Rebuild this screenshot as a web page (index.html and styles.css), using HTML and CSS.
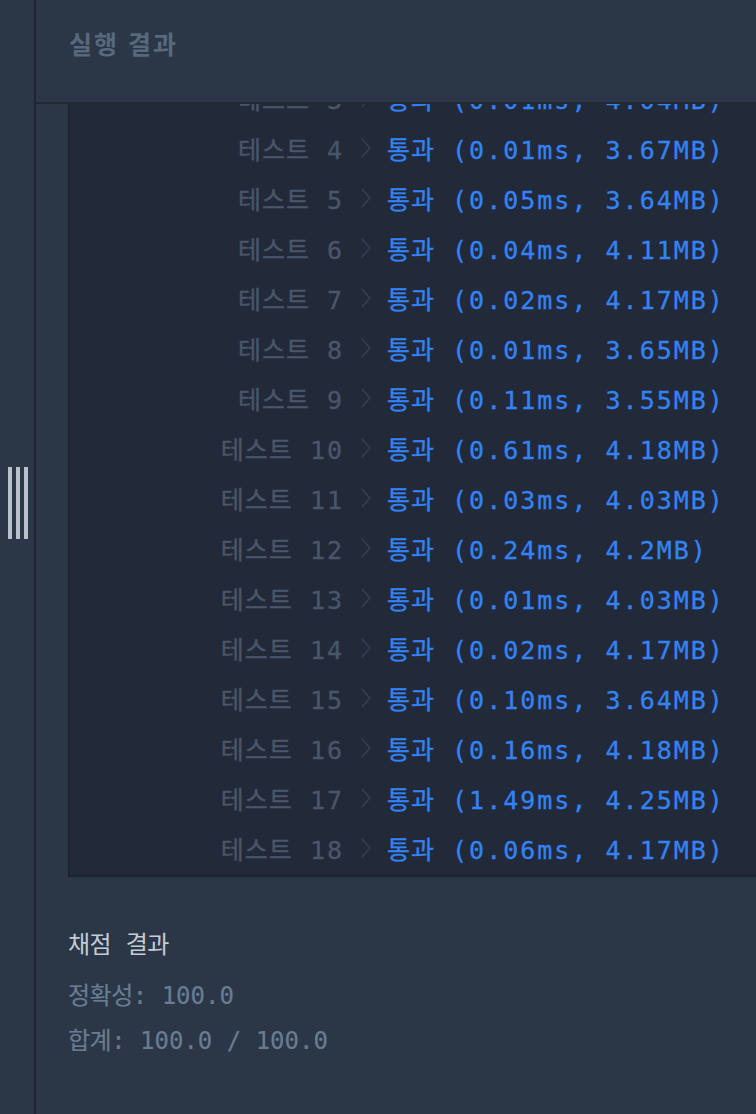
FILE: index.html
```html
<!DOCTYPE html>
<html lang="ko">
<head>
    <meta charset="UTF-8">
    <meta name="viewport" content="width=device-width, initial-scale=1.0">
    <title>실행 결과</title>
    <link rel="stylesheet" href="styles.css">
</head>
<body>
    <div class="rail">
        <div class="handle">
            <span></span><span></span><span></span>
        </div>
    </div>

    <div class="panel">
        <div class="panel-header">실행 결과</div>

        <div class="console">
            <div class="rows">
                <div class="row"><span class="name"><span class="ko">테스트</span> 1</span><svg class="chev" viewBox="0 0 10 20"><polyline points="1,1 9,10 1,19"/></svg><span class="result"><span class="ko">통과</span> (0.01ms, 4.2MB)</span></div>
                <div class="row"><span class="name"><span class="ko">테스트</span> 2</span><svg class="chev" viewBox="0 0 10 20"><polyline points="1,1 9,10 1,19"/></svg><span class="result"><span class="ko">통과</span> (0.02ms, 4.16MB)</span></div>
                <div class="row"><span class="name"><span class="ko">테스트</span> 3</span><svg class="chev" viewBox="0 0 10 20"><polyline points="1,1 9,10 1,19"/></svg><span class="result"><span class="ko">통과</span> (0.01ms, 4.04MB)</span></div>
                <div class="row"><span class="name"><span class="ko">테스트</span> 4</span><svg class="chev" viewBox="0 0 10 20"><polyline points="1,1 9,10 1,19"/></svg><span class="result"><span class="ko">통과</span> (0.01ms, 3.67MB)</span></div>
                <div class="row"><span class="name"><span class="ko">테스트</span> 5</span><svg class="chev" viewBox="0 0 10 20"><polyline points="1,1 9,10 1,19"/></svg><span class="result"><span class="ko">통과</span> (0.05ms, 3.64MB)</span></div>
                <div class="row"><span class="name"><span class="ko">테스트</span> 6</span><svg class="chev" viewBox="0 0 10 20"><polyline points="1,1 9,10 1,19"/></svg><span class="result"><span class="ko">통과</span> (0.04ms, 4.11MB)</span></div>
                <div class="row"><span class="name"><span class="ko">테스트</span> 7</span><svg class="chev" viewBox="0 0 10 20"><polyline points="1,1 9,10 1,19"/></svg><span class="result"><span class="ko">통과</span> (0.02ms, 4.17MB)</span></div>
                <div class="row"><span class="name"><span class="ko">테스트</span> 8</span><svg class="chev" viewBox="0 0 10 20"><polyline points="1,1 9,10 1,19"/></svg><span class="result"><span class="ko">통과</span> (0.01ms, 3.65MB)</span></div>
                <div class="row"><span class="name"><span class="ko">테스트</span> 9</span><svg class="chev" viewBox="0 0 10 20"><polyline points="1,1 9,10 1,19"/></svg><span class="result"><span class="ko">통과</span> (0.11ms, 3.55MB)</span></div>
                <div class="row"><span class="name"><span class="ko">테스트</span> 10</span><svg class="chev" viewBox="0 0 10 20"><polyline points="1,1 9,10 1,19"/></svg><span class="result"><span class="ko">통과</span> (0.61ms, 4.18MB)</span></div>
                <div class="row"><span class="name"><span class="ko">테스트</span> 11</span><svg class="chev" viewBox="0 0 10 20"><polyline points="1,1 9,10 1,19"/></svg><span class="result"><span class="ko">통과</span> (0.03ms, 4.03MB)</span></div>
                <div class="row"><span class="name"><span class="ko">테스트</span> 12</span><svg class="chev" viewBox="0 0 10 20"><polyline points="1,1 9,10 1,19"/></svg><span class="result"><span class="ko">통과</span> (0.24ms, 4.2MB)</span></div>
                <div class="row"><span class="name"><span class="ko">테스트</span> 13</span><svg class="chev" viewBox="0 0 10 20"><polyline points="1,1 9,10 1,19"/></svg><span class="result"><span class="ko">통과</span> (0.01ms, 4.03MB)</span></div>
                <div class="row"><span class="name"><span class="ko">테스트</span> 14</span><svg class="chev" viewBox="0 0 10 20"><polyline points="1,1 9,10 1,19"/></svg><span class="result"><span class="ko">통과</span> (0.02ms, 4.17MB)</span></div>
                <div class="row"><span class="name"><span class="ko">테스트</span> 15</span><svg class="chev" viewBox="0 0 10 20"><polyline points="1,1 9,10 1,19"/></svg><span class="result"><span class="ko">통과</span> (0.10ms, 3.64MB)</span></div>
                <div class="row"><span class="name"><span class="ko">테스트</span> 16</span><svg class="chev" viewBox="0 0 10 20"><polyline points="1,1 9,10 1,19"/></svg><span class="result"><span class="ko">통과</span> (0.16ms, 4.18MB)</span></div>
                <div class="row"><span class="name"><span class="ko">테스트</span> 17</span><svg class="chev" viewBox="0 0 10 20"><polyline points="1,1 9,10 1,19"/></svg><span class="result"><span class="ko">통과</span> (1.49ms, 4.25MB)</span></div>
                <div class="row"><span class="name"><span class="ko">테스트</span> 18</span><svg class="chev" viewBox="0 0 10 20"><polyline points="1,1 9,10 1,19"/></svg><span class="result"><span class="ko">통과</span> (0.06ms, 4.17MB)</span></div>
            </div>
        </div>

        <div class="summary">
            <div class="summary-title"><span class="ko">채점</span> <span class="ko">결과</span></div>
            <div class="summary-line"><span class="ko">정확성</span>: 100.0</div>
            <div class="summary-line"><span class="ko">합계</span>: 100.0 / 100.0</div>
        </div>
    </div>
</body>
</html>
```

FILE: styles.css
```css
html, body {
    height: 100%;
}
body {
    display: flex;
    flex-direction: row;
    margin: 0;
    overflow: hidden;
    background-color: #2b3646;
    font-family: "Noto Sans CJK KR", "Noto Sans", sans-serif;
}
.rail {
    width: 36px;
    flex-shrink: 0;
    border-right: 2px solid #1d2533;
    display: flex;
    flex-direction: column;
    align-items: flex-start;
    padding: 467px 0 0 8px;
    box-sizing: border-box;
}
.handle {
    display: flex;
    gap: 4px;
}
.handle span {
    width: 4px;
    height: 72px;
    background-color: #b8c1cb;
}
.panel {
    flex: 1;
    min-width: 0;
    display: flex;
    flex-direction: column;
}
.panel > div {
    flex-shrink: 0;
}
.panel-header {
    height: 104px;
    border-bottom: 2px solid #1f2835;
    padding: 27px 0 0 33px;
    box-sizing: border-box;
    font-size: 25px;
    font-weight: 700;
    letter-spacing: 2px;
    line-height: 32px;
    color: #58687d;
}
.console {
    margin-left: 32px;
    margin-right: -40px;
    padding-bottom: 2px;
    background-color: #222a3a;
    border-left: 2px solid #1c2432;
    border-bottom: 2px solid #1c2432;
    overflow: hidden;
}
.rows {
    margin-top: -131px;
}
.row {
    display: flex;
    align-items: center;
    height: 50px;
    font-family: "DejaVu Sans Mono", "Noto Sans CJK KR", monospace;
    font-size: 25px;
    letter-spacing: 2px;
    white-space: pre;
    -webkit-text-stroke: 0.3px currentColor;
}
.row .ko {
    letter-spacing: 1px;
}
.name {
    width: 274px;
    text-align: right;
    color: #4a5669;
}
.chev {
    width: 10px;
    height: 20px;
    margin: 0 16px 0 17px;
    fill: none;
    stroke: #394456;
    stroke-width: 1.2;
}
.result {
    color: #3483f5;
}
.summary {
    padding: 52px 0 0 32px;
    font-family: "DejaVu Sans Mono", "Noto Sans CJK KR", monospace;
    font-size: 24px;
}
.summary-title,
.summary-line {
    white-space: pre;
}
.summary .ko {
    letter-spacing: -0.5px;
}
.summary-title {
    line-height: 32px;
    margin-bottom: 13px;
    color: #c3ccd6;
}
.summary-line {
    line-height: 45px;
    color: #687c92;
    -webkit-text-stroke: 0.2px currentColor;
}
```
